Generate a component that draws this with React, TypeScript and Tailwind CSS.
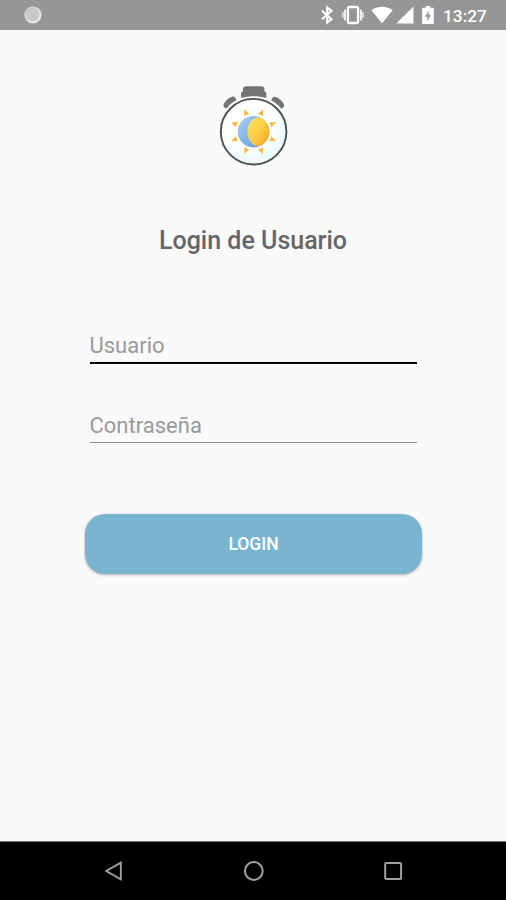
import { useState } from "react";

function BluetoothIcon() {
  return (
    <svg viewBox="0 0 14 20" className="h-5 w-3.5" fill="none" stroke="#fff" strokeWidth="2.2">
      <path d="M2 5.8 11.4 14.3 7.2 17.6V2.4l4.2 3.3L2 14.2" />
    </svg>
  );
}

function VibrateIcon() {
  return (
    <svg viewBox="0 0 24 20" className="h-5 w-6" fill="none" stroke="#fff">
      <rect x="6.9" y="2" width="10.2" height="16" rx="1.5" strokeWidth="2.3" />
      <path d="M4 4.5v11M20 4.5v11" strokeWidth="2" strokeOpacity=".8" />
      <path d="M2 7v6M22 7v6" strokeWidth="2" strokeOpacity=".6" />
    </svg>
  );
}

function WifiIcon() {
  return (
    <svg viewBox="0 0 22 20" className="h-5 w-[22px]" fill="#fff">
      <path d="M11 18.3.3 5.2C3.2 2.9 7 1.7 11 1.7s7.8 1.2 10.7 3.5z" />
    </svg>
  );
}

function SignalIcon() {
  return (
    <svg viewBox="0 0 18 20" className="h-5 w-[18px]" fill="#fff">
      <path d="M17.5 1.5v17H.2z" />
    </svg>
  );
}

function BatteryIcon() {
  return (
    <svg viewBox="0 0 12 20" className="h-5 w-3">
      <path
        d="M3.8 1h4.4v1.8h2.3c.8 0 1.3.5 1.3 1.3v13.6c0 .8-.5 1.3-1.3 1.3h-9c-.8 0-1.3-.5-1.3-1.3V4.1c0-.8.5-1.3 1.3-1.3h2.3z"
        fill="#fff"
      />
      <path d="M6.7 5.5 3 11.7h2.4v4.5L9 9.8H6.7z" fill="#969696" />
    </svg>
  );
}

function StatusBar() {
  return (
    <header className="flex h-[30px] items-center bg-[#969696] pl-6 pr-[19px]">
      <svg viewBox="0 0 18 18" className="size-[18px]">
        <circle cx="9" cy="9" r="8.6" fill="#e6e6e6" />
        <circle cx="8.3" cy="8.2" r="7" fill="#c9c9c9" />
      </svg>
      <div className="ml-auto flex items-center">
        <BluetoothIcon />
        <span className="ml-[7px]">
          <VibrateIcon />
        </span>
        <span className="ml-[6px]">
          <WifiIcon />
        </span>
        <span className="ml-[3px]">
          <SignalIcon />
        </span>
        <span className="ml-[8px]">
          <BatteryIcon />
        </span>
        <span className="ml-[9px] w-[44px] whitespace-nowrap pt-0.5 text-[17.3px] leading-5 font-medium text-white">
          13:27
        </span>
      </div>
    </header>
  );
}

const RAYS = [22.5, 67.5, 112.5, 157.5, 202.5, 247.5, 292.5, 337.5];

// Stopwatch with a half moon, half sun face
function Logo() {
  return (
    <svg viewBox="0 0 86 100" className="h-[100px] w-[86px]">
      <defs>
        <radialGradient id="face" cx=".4" cy=".35" r=".75">
          <stop offset=".5" stopColor="#fff" />
          <stop offset="1" stopColor="#e2f8f8" />
        </radialGradient>
        <linearGradient id="moon" x1="0" y1="0" x2="1" y2="1">
          <stop offset="0" stopColor="#a5d0f5" />
          <stop offset="1" stopColor="#5f9ad6" />
        </linearGradient>
        <linearGradient id="sun" x1="0" y1="0" x2="1" y2="1">
          <stop offset="0" stopColor="#ffe45c" />
          <stop offset=".5" stopColor="#fdce45" />
          <stop offset="1" stopColor="#f79a1c" />
        </linearGradient>
      </defs>
      <g fill="#747474">
        <path d="M31 21.8v-3.6c0-1.8.5-2.6 2-2.8V13.2c0-2 1.1-3 3.2-3h15c2.1 0 3.2 1 3.2 3v2.2c1.5.2 2 1 2 2.8v3.6c-8-2.2-17.4-2.2-25.4 0z" />
        <path d="M16.5 32.4c-2.8-.8-3.8-2.8-2.4-5.2 2-3.2 4.6-5.2 7.7-6.4 2.2-.7 4.2.7 4.7 3.2-3.7 2-7 4.8-10 8.4z" />
        <path d="M71.2 32.6c2.8-.8 3.7-2.9 2.3-5.3-2-3.2-4.5-5.2-7.6-6.4-2.2-.7-4.1.8-4.6 3.3 3.6 2 7 4.8 9.9 8.4z" />
      </g>
      <circle cx="43.6" cy="55.7" r="32.8" fill="url(#face)" stroke="#4d5252" strokeWidth="1.9" />
      {RAYS.map((angle) => (
        <path
          key={angle}
          d="M40.8 38 43.6 31.3l2.8 6.7c-1.9-.7-3.7-.7-5.6 0z"
          fill="#f9b83c"
          transform={`rotate(${angle} 43.6 55.7)`}
        />
      ))}
      <circle cx="43.5" cy="55.7" r="15.8" fill="url(#moon)" />
      <path
        d="M49 41.5c6 2 10.3 7.5 10.3 14.2S55 68.3 49 70c-6.7.5-11.6-6.5-11.6-14.3S42.3 41 49 41.5z"
        fill="url(#sun)"
      />
    </svg>
  );
}

function NavBar() {
  return (
    <nav className="flex h-[59px] items-center justify-between border-t border-[#777] bg-black pl-[103px] pr-[102px]">
      <svg viewBox="0 0 22 22" className="size-[22px]" fill="none" stroke="#a0a0a0" strokeWidth="1.9">
        <path d="M17.8 2.6v16.8L3.3 11z" />
      </svg>
      <svg viewBox="0 0 22 22" className="size-[22px]" fill="none" stroke="#a0a0a0" strokeWidth="2">
        <circle cx="10.8" cy="11" r="8.9" />
      </svg>
      <svg viewBox="0 0 22 22" className="size-[22px]" fill="none" stroke="#a0a0a0" strokeWidth="2">
        <rect x="3.2" y="3" width="15.9" height="15.9" rx="1" />
      </svg>
    </nav>
  );
}

export default function App() {
  const [user, setUser] = useState("");
  const [password, setPassword] = useState("");

  return (
    <div className="flex h-[900px] w-[506px] flex-col bg-[#fafafa] font-['Roboto',sans-serif]">
      <StatusBar />
      <main className="flex flex-1 flex-col items-center pt-[46px]">
        <Logo />
        <h1 className="mt-[49px] text-[25px] leading-8 font-medium text-[#666]">Login de Usuario</h1>
        <form className="mt-[73px] flex w-[337px] flex-col" onSubmit={(e) => e.preventDefault()}>
          <input
            type="text"
            placeholder="Usuario"
            value={user}
            onChange={(e) => setUser(e.target.value)}
            className="mx-[5px] h-[34px] border-b-2 border-black pb-0.5 text-[22px] text-[#444] outline-none placeholder:text-[#999]"
          />
          <input
            type="password"
            placeholder="Contraseña"
            value={password}
            onChange={(e) => setPassword(e.target.value)}
            className="mx-[5px] mt-[46px] h-[33px] border-b border-[#8a8a8a] pb-0.5 text-[22px] text-[#444] outline-none placeholder:text-[#999]"
          />
          <button
            type="submit"
            className="mt-[71px] h-[60px] rounded-[20px] bg-[#7ab5d0] pt-px pl-px text-[17.5px] font-medium text-white shadow-[0_1px_3px_rgba(0,0,0,0.3)]"
          >
            LOGIN
          </button>
        </form>
      </main>
      <NavBar />
    </div>
  );
}
